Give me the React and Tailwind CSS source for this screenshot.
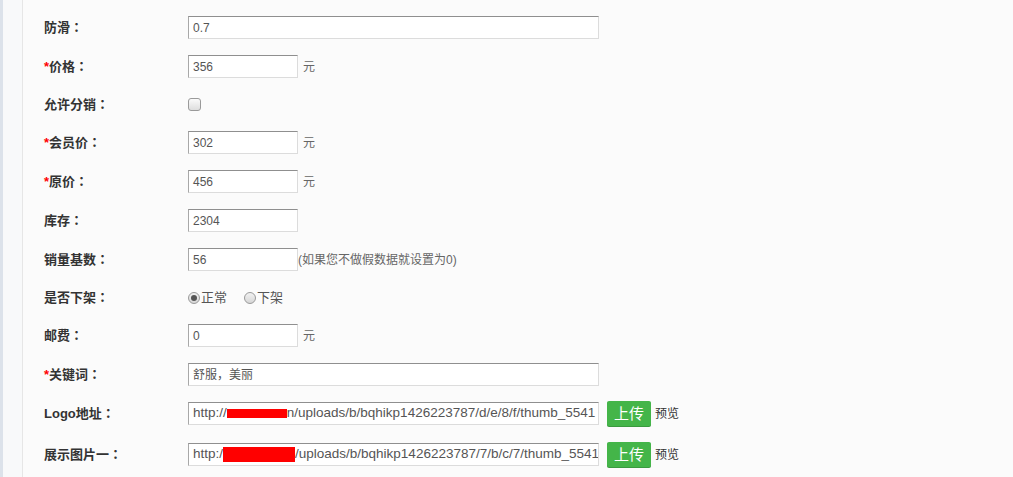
const font = { fontFamily: '"Liberation Sans", "Noto Sans CJK SC", sans-serif' };

function Label({ text, required }) {
  return (
    <div className="w-[144px] shrink-0 text-[13px] font-bold text-[#333]">
      {required && <span className="text-[#f00]">*</span>}
      {text}
      <span className="font-['Noto_Sans_CJK_TC']">：</span>
    </div>
  );
}

function Field({ value, wide }) {
  return (
    <div
      className={`${wide ? 'w-[411px]' : 'w-[110px]'} h-[23px] flex items-center px-[4px] bg-white border border-[#dcdcdc] border-t-[#8f8f8f] border-l-[#a8a8a8] text-[12px] text-[#555] whitespace-nowrap overflow-hidden`}
    >
      {value}
    </div>
  );
}

function Unit({ children }) {
  return <span className="ml-[5px] text-[12px] text-[#666]">{children}</span>;
}

function Radio({ checked, label }) {
  return (
    <span className="flex items-center text-[13px] text-[#555]">
      <span className="w-[12px] h-[12px] rounded-full border border-[#9a9a9a] bg-gradient-to-b from-[#f2f2f2] to-[#d6d6d6] flex items-center justify-center">
        {checked && <span className="w-[6px] h-[6px] rounded-full bg-[#555]" />}
      </span>
      <span className="ml-[1px]">{label}</span>
    </span>
  );
}

function UploadRow({ label, pre, red, post, redH, top }) {
  return (
    <div className={`flex items-center h-[39px] ${top}`}>
      <Label text={label} />
      <div className="w-[411px] h-[23px] flex items-center px-[4px] bg-white border border-[#dcdcdc] border-t-[#8f8f8f] border-l-[#a8a8a8] text-[13.5px] text-[#555] whitespace-nowrap overflow-hidden">
        <span>{pre}</span>
        <span className={`inline-block shrink-0 bg-[#f00] ${red} ${redH}`} />
        <span>{post}</span>
      </div>
      <button className="ml-[8px] w-[44px] h-[25px] rounded-[2px] bg-[#44b549] shadow-[0_1px_0_#3a9a3f] text-white text-[15px] leading-[25px]">
        上传
      </button>
      <span className="ml-[4px] text-[12px] text-[#333]">预览</span>
    </div>
  );
}

export default function App() {
  return (
    <div className="flex w-[1013px] h-[477px] bg-[#fbfbfb] overflow-hidden" style={font}>
      <div className="w-[3px] bg-[#dce2ea]" />
      <div className="w-[20px] bg-[#f8f9fa] border-r border-[#e6e6e6]" />
      <div className="flex-1 pl-[21px] pt-[8px] flex flex-col">
        <div className="flex items-center h-[39px]">
          <Label text="防滑" />
          <Field value="0.7" wide />
        </div>
        <div className="flex items-center h-[39px]">
          <Label text="价格" required />
          <Field value="356" />
          <Unit>元</Unit>
        </div>
        <div className="flex items-center h-[37px]">
          <Label text="允许分销" />
          <span className="w-[13px] h-[13px] rounded-[3px] border border-[#9a9a9a] bg-gradient-to-b from-[#fafafa] to-[#dedede]" />
        </div>
        <div className="flex items-center h-[39px]">
          <Label text="会员价" required />
          <Field value="302" />
          <Unit>元</Unit>
        </div>
        <div className="flex items-center h-[39px]">
          <Label text="原价" required />
          <Field value="456" />
          <Unit>元</Unit>
        </div>
        <div className="flex items-center h-[39px]">
          <Label text="库存" />
          <Field value="2304" />
        </div>
        <div className="flex items-center h-[39px]">
          <Label text="销量基数" />
          <Field value="56" />
          <span className="text-[12px] text-[#666]">(如果您不做假数据就设置为0)</span>
        </div>
        <div className="flex items-center h-[37px]">
          <Label text="是否下架" />
          <div className="flex items-center gap-[17px]">
            <Radio checked label="正常" />
            <Radio label="下架" />
          </div>
        </div>
        <div className="flex items-center h-[39px]">
          <Label text="邮费" />
          <Field value="0" />
          <Unit>元</Unit>
        </div>
        <div className="flex items-center h-[39px]">
          <Label text="关键词" required />
          <Field value="舒服，美丽" wide />
        </div>
        <UploadRow
          label="Logo地址"
          pre="http://"
          red="w-[60px]"
          redH="h-[9px]"
          post="n/uploads/b/bqhikp1426223787/d/e/8/f/thumb_5541"
        />
        <UploadRow
          label="展示图片一"
          pre="http:/"
          red="w-[72px]"
          redH="h-[15px]"
          post="/uploads/b/bqhikp1426223787/7/b/c/7/thumb_5541"
          top="mt-[2px]"
        />
      </div>
    </div>
  );
}
